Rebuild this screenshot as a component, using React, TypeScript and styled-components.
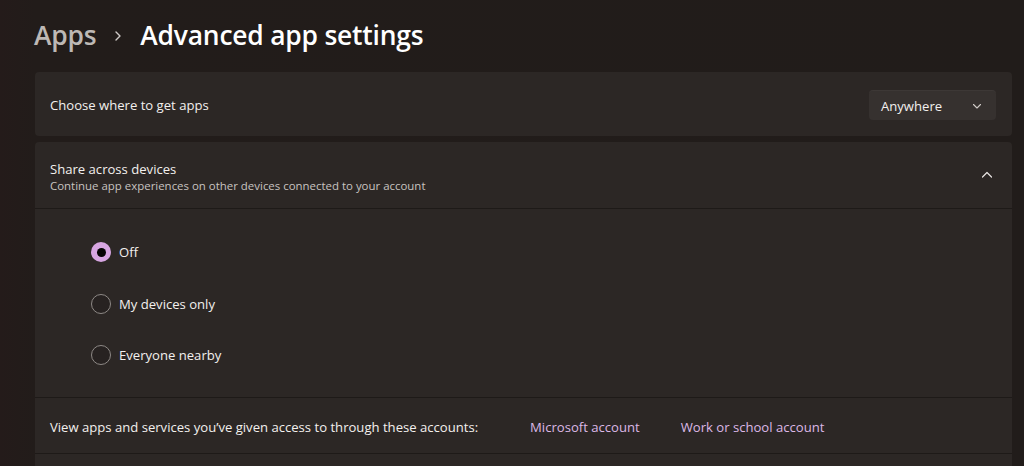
import React from 'react'
import styled, { createGlobalStyle } from 'styled-components'

const GlobalStyle = createGlobalStyle`
  html, body {
    margin: 0;
    padding: 0;
    background: #211c1a;
    height: 100%;
    overflow: hidden;
  }
  body {
    font-family: "Open Sans", "Noto Sans", sans-serif;
    color: #f3f0ee;
    -webkit-font-smoothing: antialiased;
  }
`

const Page = styled.div`
  padding: 0 12px 0 35px;
  background: linear-gradient(90deg, #241b1a 0px, #221c1a 35px, #211c1a 100%);
  height: 466px;
  overflow: hidden;
  box-sizing: border-box;
`

const Header = styled.div`
  height: 72px;
  display: flex;
  align-items: center;
  gap: 14px;
  padding-bottom: 3px;
  box-sizing: border-box;
  margin-left: -1px;
`

const Crumb = styled.span<{ $current?: boolean }>`
  font-size: 26.4px;
  font-weight: 600;
  letter-spacing: -0.2px;
  color: ${(p) => (p.$current ? '#ffffff' : '#bdb8b5')};
`

const CrumbArrow = styled.svg`
  width: 8px;
  height: 12px;
  margin: 2px 4px 0 4px;
`

const Card = styled.div`
  background: #2c2725;
  border-radius: 4px;
  margin-bottom: 6px;
  overflow: hidden;
`

const Row = styled.div<{ $height: number }>`
  height: ${(p) => p.$height}px;
  display: flex;
  align-items: center;
  padding: 0 16px 0 15px;
  box-sizing: border-box;
`

const Section = styled.div`
  border-top: 1px solid #1e1a18;
`

const Label = styled.div`
  font-size: 13.1px;
  color: #f3f0ee;
  flex: 1;
  padding-top: 2px;
`

const TitleBlock = styled.div`
  flex: 1;
  display: flex;
  flex-direction: column;
  padding-top: 1px;
`

const SubLabel = styled.div`
  font-size: 11.45px;
  color: #c8c3c0;
`

const Dropdown = styled.button`
  width: 127px;
  height: 30px;
  background: #36312f;
  border: none;
  border-top: 1px solid #3d3836;
  border-radius: 4px;
  display: flex;
  align-items: center;
  justify-content: space-between;
  padding: 0 14px 0 12px;
  font-family: inherit;
  font-size: 13.1px;
  color: #f3f0ee;
  margin-top: 2px;
`

const Chevron = styled.svg`
  width: 10px;
  height: 10px;
  flex: none;
`

const ExpandIcon = styled.svg`
  width: 12px;
  height: 12px;
  margin-right: 3px;
`

const RadioGroup = styled.div`
  padding: 23px 0 22px 56px;
  display: flex;
  flex-direction: column;
  gap: 11.5px;
`

const RadioItem = styled.label`
  height: 40px;
  display: flex;
  align-items: center;
  gap: 8px;
  font-size: 13.1px;
  color: #f3f0ee;
`

const RadioCircle = styled.span<{ $checked?: boolean }>`
  width: 20px;
  height: 20px;
  border-radius: 50%;
  box-sizing: border-box;
  flex: none;
  display: flex;
  align-items: center;
  justify-content: center;
  background: ${(p) => (p.$checked ? '#d7a6e2' : '#272221')};
  border: ${(p) => (p.$checked ? 'none' : '1px solid #8e8986')};
  &::after {
    content: '';
    display: ${(p) => (p.$checked ? 'block' : 'none')};
    width: 9px;
    height: 9px;
    border-radius: 50%;
    background: #050404;
  }
`

const Link = styled.a<{ $gap: number }>`
  font-size: 13.1px;
  color: #dcb8e6;
  margin-left: ${(p) => p.$gap}px;
  text-decoration: none;
`

const FooterLabel = styled.span`
  font-size: 13.1px;
  color: #f3f0ee;
`

const FooterRow = styled(Row)`
  padding-top: 3px;
`

export default function App() {
  return (
    <>
      <GlobalStyle />
      <Page>
        <Header>
          <Crumb>Apps</Crumb>
          <CrumbArrow viewBox="0 0 8 12">
            <path d="M2 2 L6 6 L2 10" fill="none" stroke="#cfcac7" strokeWidth="1.4" strokeLinecap="round" strokeLinejoin="round" />
          </CrumbArrow>
          <Crumb $current>Advanced app settings</Crumb>
        </Header>

        <Card>
          <Row $height={64}>
            <Label>Choose where to get apps</Label>
            <Dropdown>
              Anywhere
              <Chevron viewBox="0 0 10 10">
                <path d="M1.5 3.5 L5 7 L8.5 3.5" fill="none" stroke="#cfcac7" strokeWidth="1.1" strokeLinecap="round" strokeLinejoin="round" />
              </Chevron>
            </Dropdown>
          </Row>
        </Card>

        <Card>
          <Row $height={66}>
            <TitleBlock>
              <Label>Share across devices</Label>
              <SubLabel>Continue app experiences on other devices connected to your account</SubLabel>
            </TitleBlock>
            <ExpandIcon viewBox="0 0 12 12">
              <path d="M1.5 8 L6 3.5 L10.5 8" fill="none" stroke="#e8e4e2" strokeWidth="1.2" strokeLinecap="round" strokeLinejoin="round" />
            </ExpandIcon>
          </Row>
          <Section>
            <RadioGroup>
              <RadioItem>
                <RadioCircle $checked />
                Off
              </RadioItem>
              <RadioItem>
                <RadioCircle />
                My devices only
              </RadioItem>
              <RadioItem>
                <RadioCircle />
                Everyone nearby
              </RadioItem>
            </RadioGroup>
          </Section>
          <Section>
            <FooterRow $height={55}>
              <FooterLabel>View apps and services you’ve given access to through these accounts:</FooterLabel>
              <Link $gap={52}>Microsoft account</Link>
              <Link $gap={41}>Work or school account</Link>
            </FooterRow>
          </Section>
          <Section>
            <Row $height={40} />
          </Section>
        </Card>
      </Page>
    </>
  )
}
